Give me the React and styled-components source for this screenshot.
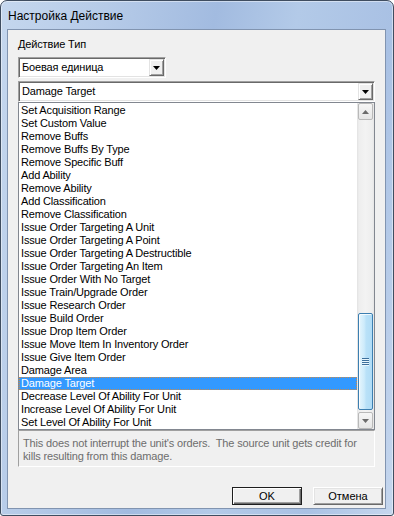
import React from "react";
import styled, { createGlobalStyle } from "styled-components";

const GlobalStyle = createGlobalStyle`
  html, body { margin: 0; padding: 0; background: #ffffff; }
  body { font-family: "Liberation Sans", Arial, sans-serif; font-size: 11px; color: #000; }
  * { box-sizing: border-box; }
`;

const Window = styled.div`
  width: 394px;
  height: 516px;
  border: 1px solid #3f4d60;
  border-radius: 7px 7px 3px 3px;
  background: linear-gradient(100deg, #c5d7ee 0%, #b6cbe8 22%, #a2bbe0 45%, #b3cae8 62%, #a9c1e4 82%, #c6d7ee 100%);
  box-shadow: inset 0 0 0 1px rgba(255, 255, 255, 0.45);
  display: flex;
  flex-direction: column;
  padding: 0 7px 6px 6px;
`;

const TitleBar = styled.div`
  height: 28px;
  display: flex;
  align-items: center;
  padding: 1px 0 0 1px;
`;

const Title = styled.span`
  font-family: "Liberation Sans", Arial, sans-serif;
  font-size: 12px;
  color: #000;
`;

const Client = styled.div`
  flex: 1;
  border: 1px solid #8194b0;
  background: #f0f0f0;
  display: flex;
  flex-direction: column;
  padding: 8px 2px 3px 10px;
  letter-spacing: -0.15px;
`;

const FieldLabel = styled.div`
  line-height: 13px;
  height: 13px;
`;

const Combo = styled.div`
  width: ${(p) => p.$width};
  height: 21px;
  margin-top: ${(p) => p.$mt};
  background: #fff;
  border: 1px solid;
  border-color: #a0a0a0 #fff #fff #a0a0a0;
  box-shadow: inset 1px 1px 0 #696969, inset -1px -1px 0 #e3e3e3;
  display: flex;
  align-items: stretch;
  padding: 1px;
`;

const ComboText = styled.div`
  flex: 1;
  line-height: 17px;
  padding-left: 2px;
  white-space: nowrap;
`;

const DropButton = styled.div`
  width: 15px;
  background: #f0f0f0;
  border: 1px solid;
  border-color: #e3e3e3 #696969 #696969 #e3e3e3;
  box-shadow: inset 1px 1px 0 #fff, inset -1px -1px 0 #a0a0a0;
  display: flex;
  align-items: center;
  justify-content: center;
`;

const ListBox = styled.div`
  width: 357px;
  height: 328px;
  background: #fff;
  border: 1px solid #828790;
  display: flex;
`;

const Items = styled.div`
  flex: 1;
  display: flex;
  flex-direction: column;
  padding-top: 1px;
`;

const Item = styled.div`
  height: 13px;
  line-height: 13px;
  padding-left: 2px;
  white-space: nowrap;
  background: ${(p) => (p.$selected ? "#3399ff" : "transparent")};
  color: ${(p) => (p.$selected ? "#fff" : "#000")};
  outline: ${(p) => (p.$selected ? "1px dotted #c98a4b" : "none")};
  outline-offset: -1px;
`;

const ScrollBar = styled.div`
  width: 17px;
  display: flex;
  flex-direction: column;
  background: linear-gradient(to right, #e2e2e2 0, #eeeeee 2px, #f3f3f3 50%, #eeeeee 15px, #e6e6e6 100%);
`;

const ScrollButton = styled.div`
  height: 17px;
  margin: 0 1px;
  border: 1px solid #b9b9b9;
  border-radius: 2px;
  background: linear-gradient(to bottom, #f6f6f6, #e6e6e6);
  display: flex;
  align-items: center;
  justify-content: center;
`;

const Track = styled.div`
  flex: 1;
  display: flex;
  flex-direction: column;
  justify-content: flex-end;
  padding: 0 1px 2px 1px;
`;

const Thumb = styled.div`
  height: 97px;
  border: 1px solid #3c7fb1;
  border-radius: 2px;
  background: linear-gradient(to right, #e5f5fd 0, #cdebfb 40%, #b9e1f8 55%, #b0dcf6 100%);
  box-shadow: inset 1px 1px 0 rgba(255, 255, 255, 0.8);
  display: flex;
  align-items: center;
  justify-content: center;
`;

const Grip = styled.div`
  width: 7px;
  display: flex;
  flex-direction: column;
  gap: 1px;
`;

const GripLine = styled.div`
  height: 1px;
  background: #3c6f9c;
  box-shadow: 0 1px 0 #e8f6fd;
`;

const Description = styled.div`
  width: 357px;
  height: 37px;
  border: 1px solid;
  border-color: #a0a0a0 #ffffff #ffffff #a0a0a0;
  color: #6d6d6d;
  line-height: 13px;
  padding: 6px 4px 0 4px;
  white-space: pre;
`;

const ButtonRow = styled.div`
  margin-top: auto;
  display: flex;
  justify-content: flex-end;
  gap: 11px;
  letter-spacing: 0;
`;

const Button = styled.div`
  width: 70px;
  height: 18px;
  background: #f0f0f0;
  border: 1px solid;
  border-color: ${(p) => (p.$default ? "#1e1e1e" : "#ffffff #696969 #696969 #ffffff")};
  box-shadow: ${(p) =>
    p.$default
      ? "inset 1px 1px 0 #fff, inset -1px -1px 0 #696969, inset -2px -2px 0 #a0a0a0"
      : "inset 1px 1px 0 #e3e3e3, inset -1px -1px 0 #a0a0a0"};
  display: flex;
  align-items: center;
  justify-content: center;
  line-height: 13px;
`;

const DownTriangle = () => (
  <svg width="7" height="4" viewBox="0 0 7 4">
    <path d="M0 0h7L3.5 4z" fill="#000" />
  </svg>
);

const ScrollArrow = ({ up }) => (
  <svg width="7" height="4" viewBox="0 0 7 4">
    <path d={up ? "M0 4h7L3.5 0z" : "M0 0h7L3.5 4z"} fill="#6b6b6b" />
  </svg>
);

const items = [
  "Set Acquisition Range",
  "Set Custom Value",
  "Remove Buffs",
  "Remove Buffs By Type",
  "Remove Specific Buff",
  "Add Ability",
  "Remove Ability",
  "Add Classification",
  "Remove Classification",
  "Issue Order Targeting A Unit",
  "Issue Order Targeting A Point",
  "Issue Order Targeting A Destructible",
  "Issue Order Targeting An Item",
  "Issue Order With No Target",
  "Issue Train/Upgrade Order",
  "Issue Research Order",
  "Issue Build Order",
  "Issue Drop Item Order",
  "Issue Move Item In Inventory Order",
  "Issue Give Item Order",
  "Damage Area",
  "Damage Target",
  "Decrease Level Of Ability For Unit",
  "Increase Level Of Ability For Unit",
  "Set Level Of Ability For Unit",
];

export default function App() {
  return (
    <>
      <GlobalStyle />
      <Window>
        <TitleBar>
          <Title>Настройка Действие</Title>
        </TitleBar>
        <Client>
          <FieldLabel>Действие Тип</FieldLabel>
          <Combo $width="148px" $mt="6px">
            <ComboText>Боевая единица</ComboText>
            <DropButton>
              <DownTriangle />
            </DropButton>
          </Combo>
          <Combo $width="357px" $mt="3px">
            <ComboText>Damage Target</ComboText>
            <DropButton>
              <DownTriangle />
            </DropButton>
          </Combo>
          <ListBox>
            <Items>
              {items.map((t) => (
                <Item key={t} $selected={t === "Damage Target"}>
                  {t}
                </Item>
              ))}
            </Items>
            <ScrollBar>
              <ScrollButton>
                <ScrollArrow up />
              </ScrollButton>
              <Track>
                <Thumb>
                  <Grip>
                    <GripLine />
                    <GripLine />
                    <GripLine />
                    <GripLine />
                  </Grip>
                </Thumb>
              </Track>
              <ScrollButton>
                <ScrollArrow />
              </ScrollButton>
            </ScrollBar>
          </ListBox>
          <Description>
            {"This does not interrupt the unit's orders.  The source unit gets credit for\nkills resulting from this damage."}
          </Description>
          <ButtonRow>
            <Button $default>OK</Button>
            <Button>Отмена</Button>
          </ButtonRow>
        </Client>
      </Window>
    </>
  );
}
